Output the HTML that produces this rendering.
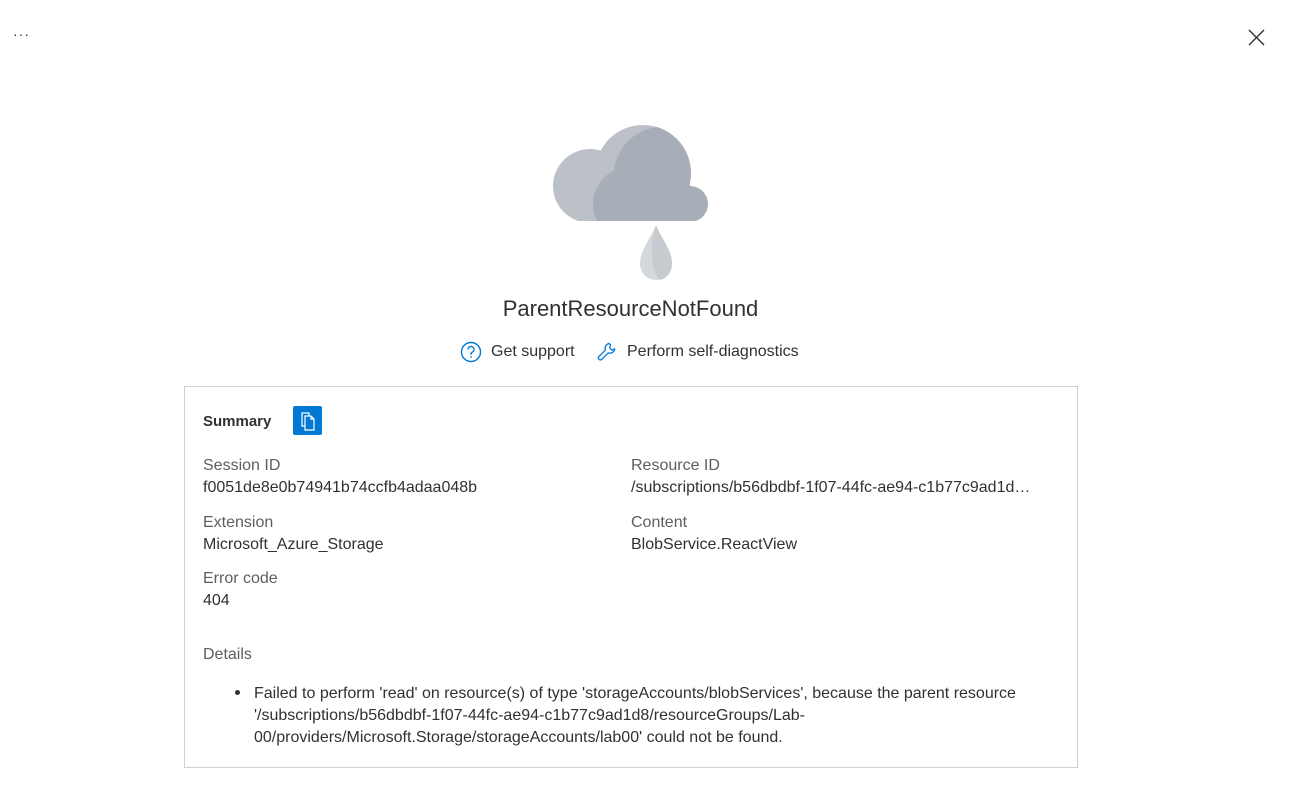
<!DOCTYPE html>
<html><head><meta charset="utf-8"><style>
body{margin:0;width:1301px;height:812px;background:#fff;font-family:"Segoe UI","Liberation Sans",sans-serif;color:#323130;position:relative;overflow:hidden}
.a{position:absolute}
.lbl{font-size:16px;color:#605e5c}
.val{font-size:16px;color:#323130}
</style></head><body>
<div class="a" style="left:13px;top:26px;font-size:14px;color:#323130;letter-spacing:1px">···</div>
<svg class="a" style="left:1248px;top:29px" width="17" height="17" viewBox="0 0 17 17"><path d="M1 1L16 16M16 1L1 16" stroke="#323130" stroke-width="1.4"/></svg>
<svg class="a" style="left:540px;top:115px" width="180" height="175" viewBox="540 115 180 175">
<defs>
<clipPath id="c"><rect x="540" y="100" width="200" height="121"/></clipPath>
<clipPath id="b"><circle cx="643" cy="173" r="48"/></clipPath>
</defs>
<g clip-path="url(#c)">
<circle cx="590" cy="186" r="37" fill="#bcc1c8"/>
<circle cx="643" cy="173" r="48" fill="#bcc1c8"/>
<circle cx="662" cy="175" r="48" fill="#a8aeb8" clip-path="url(#b)"/>
<rect x="628" y="185" width="62" height="40" fill="#a8aeb8"/>
<circle cx="690" cy="204" r="18" fill="#a8aeb8"/>
<circle cx="630" cy="204" r="37" fill="#a8aeb8"/>
</g>
<path d="M656 225 C650 240 640 250 640 264 A16 16 0 0 0 672 264 C672 250 662 240 656 225Z" fill="#d4d7db"/>
<path d="M656 225 C662 240 672 250 672 264 A16 16 0 0 1 660 280 C650 270 650 245 656 225Z" fill="#c7cbd0"/>
</svg>
<div class="a" style="left:0;width:1261px;top:296px;text-align:center;font-size:22px;color:#323130">ParentResourceNotFound</div>
<svg class="a" style="left:460px;top:341px" width="22" height="22" viewBox="0 0 22 22"><circle cx="11" cy="11" r="9.5" fill="none" stroke="#0078d4" stroke-width="1.4"/><path d="M8 8.5a3 3 0 1 1 4.2 2.7c-.8.4-1.2.9-1.2 1.8v.8" fill="none" stroke="#0078d4" stroke-width="1.4"/><circle cx="11" cy="16" r=".9" fill="#0078d4"/></svg>
<div class="a val" style="left:491px;top:343px">Get support</div>
<svg class="a" style="left:596px;top:341px" width="22" height="22" viewBox="0 0 22 22"><path d="M13 2.5a5 5 0 0 0-3.6 6.6L2.8 15.7a2 2 0 0 0 2.8 2.8l6.6-6.6A5 5 0 0 0 18.8 8l-3 1-2.2-2.2 1-3a5 5 0 0 0-1.6-1.3z" fill="none" stroke="#0078d4" stroke-width="1.3" stroke-linejoin="round"/></svg>
<div class="a val" style="left:627px;top:343px">Perform self-diagnostics</div>
<div class="a" style="left:184px;top:386px;width:892px;height:380px;border:1px solid #d2d0ce"></div>
<div class="a" style="left:203px;top:413px;font-size:15px;font-weight:bold;color:#323130">Summary</div>
<div class="a" style="left:293px;top:406px;width:29px;height:29px;background:#0078d4;border-radius:2px"></div>
<svg class="a" style="left:293px;top:406px" width="29" height="29" viewBox="0 0 29 29"><path d="M9 7h7v13H9z" fill="none" stroke="#fff" stroke-width="1.2"/><path d="M12 10h6l3 3v11h-9z" fill="#0078d4" stroke="#fff" stroke-width="1.2"/><path d="M18 10v3h3" fill="none" stroke="#fff" stroke-width="1.2"/></svg>
<div class="a lbl" style="left:203px;top:457px">Session ID</div>
<div class="a val" style="left:203px;top:479px">f0051de8e0b74941b74ccfb4adaa048b</div>
<div class="a lbl" style="left:631px;top:457px">Resource ID</div>
<div class="a val" style="left:631px;top:479px;width:408px;white-space:nowrap;overflow:hidden;text-overflow:ellipsis">/subscriptions/b56dbdbf-1f07-44fc-ae94-c1b77c9ad1d8/resourceGroups</div>
<div class="a lbl" style="left:203px;top:514px">Extension</div>
<div class="a val" style="left:203px;top:536px">Microsoft_Azure_Storage</div>
<div class="a lbl" style="left:631px;top:514px">Content</div>
<div class="a val" style="left:631px;top:536px">BlobService.ReactView</div>
<div class="a lbl" style="left:203px;top:570px">Error code</div>
<div class="a val" style="left:203px;top:592px">404</div>
<div class="a lbl" style="left:203px;top:646px">Details</div>
<div class="a" style="left:235px;top:690px;width:5px;height:5px;border-radius:50%;background:#323130"></div>
<div class="a val" style="left:254px;top:683px;width:800px;line-height:22px">Failed to perform 'read' on resource(s) of type 'storageAccounts/blobServices', because the parent resource '/subscriptions/b56dbdbf-1f07-44fc-ae94-c1b77c9ad1d8/resourceGroups/Lab-00/providers/Microsoft.Storage/storageAccounts/lab00' could not be found.</div>
</body></html>
